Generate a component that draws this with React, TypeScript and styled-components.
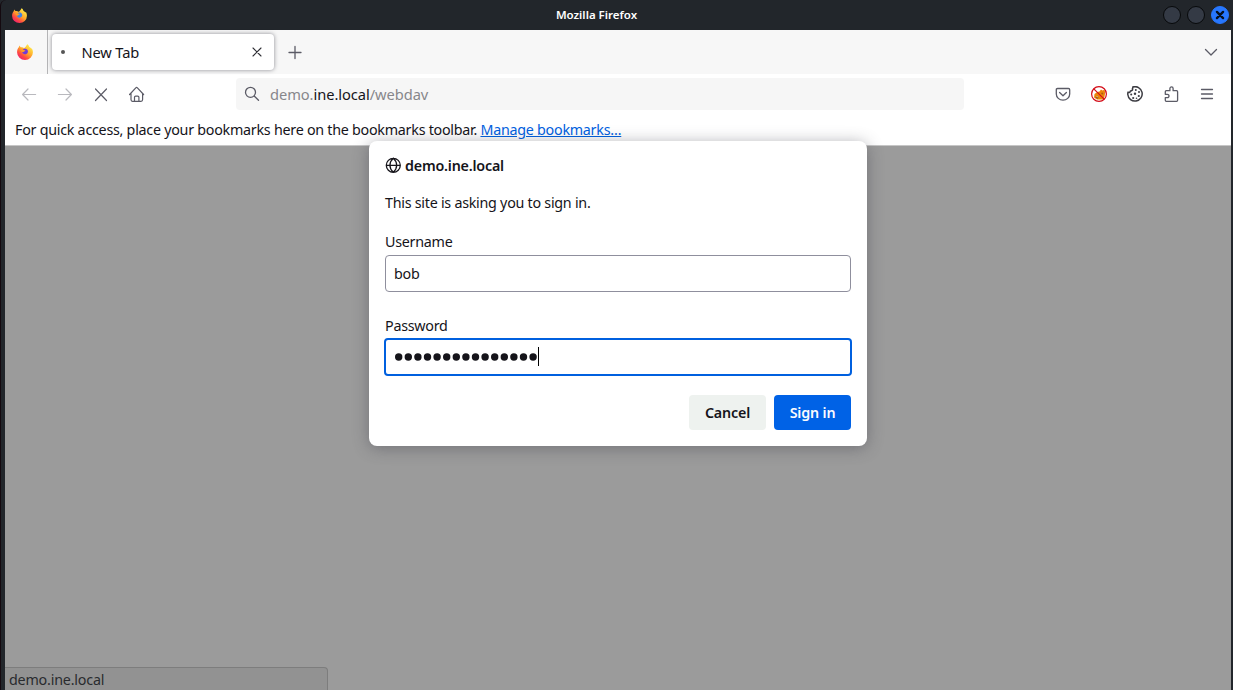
import React from 'react';
import styled, { createGlobalStyle, css } from 'styled-components';

const Global = createGlobalStyle`
  * { box-sizing: border-box; }
  html, body { margin: 0; padding: 0; background: #22262b; overflow: hidden; }
  body { font-family: "Noto Sans", sans-serif; font-size: 14.3px; letter-spacing: -0.26px; color: #15141a; }
  svg { display: block; flex: none; }
`;

const Window = styled.div`
  width: 1233px;
  height: 690px;
  display: flex;
  flex-direction: column;
  background: #22262b;
  border-left: 1px solid #14090f;
  border-top-left-radius: 6px;
  overflow: hidden;
`;
const TitleBar = styled.header`
  height: 30px;
  flex: none;
  display: grid;
  grid-template-columns: 1fr auto 1fr;
  align-items: center;
  padding: 0 4px 0 11px;
`;
const WindowTitle = styled.span`
  color: #fff;
  font-size: 11.5px;
  font-weight: 600;
  letter-spacing: 0;
  margin: 0 48px 2px 0;
`;
const WindowButtons = styled.div`
  display: flex;
  gap: 6px;
  justify-content: flex-end;
`;
const WindowButton = styled.span<{ $close?: boolean }>`
  width: 18px;
  height: 18px;
  border-radius: 50%;
  display: grid;
  place-items: center;
  background: ${(p) => (p.$close ? '#2777ff' : '#343a45')};
  border: 1px solid ${(p) => (p.$close ? '#2777ff' : '#07090b')};
`;
const Client = styled.main`
  flex: 1;
  min-height: 0;
  margin: 0 2px 0 4px;
  display: flex;
  flex-direction: column;
  background: #fff;
`;
const TabStrip = styled.div`
  height: 44px;
  flex: none;
  display: flex;
  align-items: center;
  background: #f7f7f7;
  padding-right: 12px;
`;
const PinnedTab = styled.div`
  width: 43px;
  height: 44px;
  border-right: 1px solid #b5b5b7;
  display: flex;
  align-items: center;
  padding-left: 12px;
`;
const ActiveTab = styled.div`
  width: 222px;
  height: 36px;
  margin: 0 13px 0 3.5px;
  border-radius: 4px;
  background: #fff;
  box-shadow: 0 0 4px rgba(80, 80, 90, 0.65);
  display: flex;
  align-items: center;
  padding: 0 9px 0 9px;
`;
const LoadingDot = styled.span`
  width: 4px;
  height: 4px;
  border-radius: 50%;
  background: #555;
  margin-right: 17px;
`;
const TabLabel = styled.span`
  flex: 1;
  font-size: 14.67px;
  letter-spacing: -0.15px;
`;
const Spacer = styled.div`
  flex: 1;
`;
const NavBar = styled.div`
  height: 40px;
  flex: none;
  display: flex;
  align-items: center;
  padding: 0 16px;
`;
const NavGroup = styled.div`
  display: flex;
  gap: 20px;
  align-items: center;
`;
const UrlBar = styled.div`
  width: 728px;
  height: 32px;
  margin: 0 0 0 91px;
  border-radius: 4px;
  background: #f6f6f6;
  display: flex;
  align-items: center;
  padding-left: 8px;
  gap: 10px;
  color: #87878b;
  font-size: 14.67px;
  letter-spacing: -0.06px;
`;
const Host = styled.span`
  color: #15141a;
`;
const Bookmarks = styled.div`
  height: 32px;
  flex: none;
  padding: 0 10px;
  line-height: 31px;
  border-bottom: 1px solid #c6c6c6;
  white-space: pre;
`;
const Link = styled.a`
  color: #0060df;
  text-decoration: underline;
`;
const Page = styled.section`
  flex: 1;
  min-height: 0;
  position: relative;
  background: #9b9b9b;
`;
const Dialog = styled.form`
  position: absolute;
  left: 364px;
  top: -5px;
  width: 498px;
  height: 305px;
  padding: 14px 16px 16px;
  border-radius: 8px;
  background: #fff;
  box-shadow: 0 2px 16px rgba(58, 57, 68, 0.42);
  display: flex;
  flex-direction: column;
`;
const DialogTitle = styled.div`
  display: flex;
  align-items: center;
  gap: 4px;
  height: 20px;
  font-weight: 600;
  letter-spacing: -0.2px;
`;
const Message = styled.p`
  margin: 18px 0 0;
  line-height: 20px;
`;
const Label = styled.label`
  margin-top: 19px;
  line-height: 20px;
`;
const Field = styled.div<{ $focused?: boolean }>`
  height: 37px;
  margin: 3px 0 5px;
  padding: 0 8px 1px;
  display: flex;
  align-items: center;
  border: 1px solid #8f8f9d;
  border-radius: 4px;
  ${(p) =>
    p.$focused &&
    css`
      height: 38px;
      margin: 2px -1px 0;
      border: 2px solid #0060df;
    `}
`;
const Caret = styled.span`
  width: 1px;
  height: 19px;
  background: #000;
`;
const Actions = styled.div`
  margin-top: auto;
  display: flex;
  justify-content: flex-end;
  gap: 8px;
`;
const Button = styled.button<{ $primary?: boolean }>`
  width: 77px;
  height: 35px;
  padding: 0 0 1px;
  border: 0;
  border-radius: 4px;
  font: 600 14.3px "Noto Sans", sans-serif;
  letter-spacing: -0.17px;
  color: ${(p) => (p.$primary ? '#fbfbfe' : '#15141a')};
  background: ${(p) => (p.$primary ? '#0062e6' : '#eef2ef')};
`;
const Status = styled.div`
  position: absolute;
  left: 0;
  bottom: 0;
  width: 323px;
  height: 23px;
  padding-left: 4px;
  line-height: 23px;
  letter-spacing: -0.2px;
  color: #292b2e;
  background: #929292;
  border: solid #7d7d7d;
  border-width: 1px 1px 0 0;
  border-top-right-radius: 4px;
`;

const Firefox = ({ size, core }: { size: number; core: string }) => (
  <svg width={size} height={size} viewBox="0 0 16 16">
    <defs>
      <linearGradient id={`fx${size}`} x1="0.85" y1="0.1" x2="0.2" y2="0.95">
        <stop offset="0" stopColor="#fff04a" />
        <stop offset="0.45" stopColor="#ffa62b" />
        <stop offset="0.75" stopColor="#ff4a40" />
        <stop offset="1" stopColor="#ee1f72" />
      </linearGradient>
    </defs>
    <path
      fill={`url(#fx${size})`}
      d="M10.2.2c1.3.7 1.8 1.8 2.1 2.9.9.2 1.7 1 2.1 1.8l.2-1c1 1.500 1.400 3 1.300 4.600A7.900 7.500 0 0 1 .1 8.500C0 6.300.8 4.400 2 3.100l.2-1.500 1.500 1.700c1.300-.3 2.500 0 3.200.8C8 3.700 9.300 2.100 10.200.2z"
    />
    <path fill={core} d="M5.300 6.300c.8-1.500 2.600-2 4.100-1.200 1.500.8 2 2.700 1.100 4-1.100 1.600-3.600 1.600-4.700.2-.5-.6-.7-1.300-.6-1.900z" />
    <path fill="#ff9b25" d="M3.200 5.400c1.500-.8 2.500-.3 3.200.5l2 .3c.1.800-1.600 1.100-1.900 1.900-1.200.3-2.500-.7-3.300-2.700z" />
  </svg>
);

const Line = ({ d, size = 16, color = '#5b5b66', w = 1.2 }: { d: string; size?: number; color?: string; w?: number }) => (
  <svg width={size} height={size} viewBox="0 0 16 16" fill="none" stroke={color} strokeWidth={w} strokeLinecap="round" strokeLinejoin="round">
    <path d={d} />
  </svg>
);

const PasswordMask = ({ length }: { length: number }) => (
  <svg width={length * 9.6 + 0.4} height="8" fill="#15141a">
    {Array.from({ length }, (_, i) => (
      <circle key={i} cx={4.7 + i * 9.6} cy="4" r="3.7" />
    ))}
  </svg>
);

const NoFox = () => (
  <svg width="16" height="16" viewBox="0 0 16 16">
    <circle cx="8" cy="8" r="7.400" fill="#fff" />
    <path d="M3 11.500 3.500 8l2.700-2L8.500 5.500l1.500-2 1.500 1 2-.8.700 3-.8 4.500-2 2.300H6z" fill="#ec8508" />
    <path d="M4 11 6 10l1.500 1.500-1 1.500zM10 7l1.500-.5 1 1.500L11 8.500z" fill="#a55b17" />
    <path d="M5 10.800 6.300 10.300l.5 1z" fill="#fff" />
    <circle cx="8" cy="8" r="7.400" fill="none" stroke="#d30b16" strokeWidth="1.200" />
    <path d="m2.800 2.800 10.400 10.400" stroke="#d30b16" strokeWidth="1.200" />
  </svg>
);

const Cookie = () => (
  <svg width="16" height="16" viewBox="0 0 16 16">
    <path
      d="M5.800 1a7.200 7.200 0 1 1-5 7.500c-.1-.8 0-1.600.3-2.400 1 .7 2.300.1 2.300-1.100C5 5 6 4 5.400 2.800c.4-.5.5-1.100.4-1.800z"
      fill="none"
      stroke="#3c3c42"
      strokeWidth="1.500"
      strokeLinejoin="round"
    />
    <g fill="#3c3c42">
      <circle cx="8.800" cy="4" r="1" />
      <circle cx="12" cy="6" r="1" />
      <circle cx="8" cy="7.800" r="1.200" />
      <circle cx="4.200" cy="8.500" r="1" />
      <circle cx="11.800" cy="10" r="1.100" />
      <circle cx="6.200" cy="12" r="1.100" />
      <circle cx="9.500" cy="12.300" r=".8" />
    </g>
  </svg>
);

export default function App() {
  return (
    <Window>
      <Global />
      <TitleBar>
        <Firefox size={15} core="#3d83e8" />
        <WindowTitle>Mozilla Firefox</WindowTitle>
        <WindowButtons>
          <WindowButton />
          <WindowButton />
          <WindowButton $close>
            <Line d="M4.500 4.500l7 7M11.500 4.500l-7 7" size={14} color="#07101d" w={2.7} />
          </WindowButton>
        </WindowButtons>
      </TitleBar>
      <Client>
        <TabStrip>
          <PinnedTab>
            <Firefox size={16} core="#7139d8" />
          </PinnedTab>
          <ActiveTab>
            <LoadingDot />
            <TabLabel>New Tab</TabLabel>
            <Line d="M4 4l8 8M12 4l-8 8" size={16} color="#303036" w={1.1} />
          </ActiveTab>
          <Line d="M8 2.500v12M2 8.500h12" w={1.3} />
          <Spacer />
          <Line d="M2.500 5.500L8 11l5.500-5.500" w={1.3} />
        </TabStrip>
        <NavBar>
          <NavGroup>
            <Line d="M1.600 8.500h13M7 3L1.600 8.500 7 14" color="#b9b9be" />
            <Line d="M1.400 8.500h13M9 3L14.400 8.500 9 14" color="#b9b9be" />
            <Line d="M2.500 3l11 11.500M13.500 3L2.500 14.500" />
            <Line d="M.6 8.500L6.800 1.800q.8-.8 1.600 0l6.200 6.700M2 7.500v6q0 1.800 1.500 1.800h8.500q1.600 0 1.600-1.800v-6M5.500 15.300v-4q0-1.200 1.200-1.200h2q1.200 0 1.200 1.200v4" />
          </NavGroup>
          <UrlBar>
            <Line d="M11.500 6.300a5 5 0 1 1-10 0a5 5 0 0 1 10 0zM10.200 10l4.300 4.300" w={1.3} />
            <span>
              demo.<Host>ine.local</Host>/webdav
            </span>
          </UrlBar>
          <Spacer />
          <NavGroup>
            <Line d="M2.500 2.500h11q1.200 0 1.200 1.200V8a6.700 6.200 0 0 1-13.400 0V3.700q0-1.200 1.200-1.200zM4.600 6.500L8 9.700l3.400-3.200" w={1.3} />
            <NoFox />
            <Cookie />
            <Line d="M3.300 4.700H6.900V2.500a1.600 1.600 0 0 1 3.200 0V4.700h3.500q1 0 1 1v8.600q0 1-1 1H3.300q-1 0-1-1v-2.600h2a1.600 1.600 0 0 0 0-3.400h-2V5.700q0-1 1-1z" w={1.3} />
            <Line d="M2.500 3.500h11M2.500 8h11M2.500 12.500h11" w={1.3} />
          </NavGroup>
        </NavBar>
        <Bookmarks>
          For quick access, place your bookmarks here on the bookmarks toolbar. <Link>Manage bookmarks…</Link>
        </Bookmarks>
        <Page>
          <Dialog>
            <DialogTitle>
              <Line
                d="M15.300 8.300A7 7 0 1 1 1.300 8.300a7 7 0 0 1 14 0zM1.300 8.300h14M8.300 1.300C3.800 5.300 3.800 11.300 8.300 15.300M8.300 1.300c4.500 4 4.500 10 0 14"
                color="#15141a"
                w={1.3}
              />
              demo.ine.local
            </DialogTitle>
            <Message>This site is asking you to sign in.</Message>
            <Label>Username</Label>
            <Field>bob</Field>
            <Label>Password</Label>
            <Field $focused>
              <PasswordMask length={15} />
              <Caret />
            </Field>
            <Actions>
              <Button type="button">Cancel</Button>
              <Button type="button" $primary>
                Sign in
              </Button>
            </Actions>
          </Dialog>
          <Status>demo.ine.local</Status>
        </Page>
      </Client>
    </Window>
  );
}
